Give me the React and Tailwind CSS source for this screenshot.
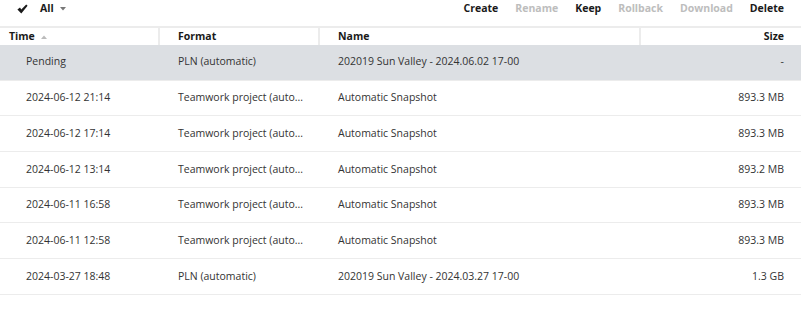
import React from 'react';

const rows = [
  { time: 'Pending', format: 'PLN (automatic)', name: '202019 Sun Valley - 2024.06.02 17-00', size: '-', selected: true },
  { time: '2024-06-12 21:14', format: 'Teamwork project (auto...', name: 'Automatic Snapshot', size: '893.3 MB' },
  { time: '2024-06-12 17:14', format: 'Teamwork project (auto...', name: 'Automatic Snapshot', size: '893.3 MB' },
  { time: '2024-06-12 13:14', format: 'Teamwork project (auto...', name: 'Automatic Snapshot', size: '893.2 MB' },
  { time: '2024-06-11 16:58', format: 'Teamwork project (auto...', name: 'Automatic Snapshot', size: '893.3 MB' },
  { time: '2024-06-11 12:58', format: 'Teamwork project (auto...', name: 'Automatic Snapshot', size: '893.3 MB' },
  { time: '2024-03-27 18:48', format: 'PLN (automatic)', name: '202019 Sun Valley - 2024.03.27 17-00', size: '1.3 GB' },
];

const actions = [
  { label: 'Create', enabled: true },
  { label: 'Rename' },
  { label: 'Keep', enabled: true },
  { label: 'Rollback' },
  { label: 'Download' },
  { label: 'Delete', enabled: true },
];

function Check() {
  return (
    <svg width="11" height="10" viewBox="0 0 11 10" className="text-[#1a1a1a]">
      <path d="M0.4 5.6 L3 3.6 L4.3 5.4 L9.2 0.4 L10.6 1.8 L4.3 9.4 Z" fill="currentColor" />
    </svg>
  );
}

export default function App() {
  return (
    <div className="h-[311px] w-[801px] overflow-hidden bg-white font-['Open_Sans',sans-serif] text-[10.5px] text-[#333]">
      {/* toolbar */}
      <div className="flex h-[26px] items-start justify-between">
        <div className="flex h-[17px] items-center pl-[17px]">
          <Check />
          <span className="ml-[12px] font-bold text-[#1a1a1a]">All</span>
          <svg width="6" height="4" viewBox="0 0 6 4" className="ml-[6px] text-[#777]">
            <path d="M0 0 H6 L3 3.5 Z" fill="currentColor" />
          </svg>
        </div>
        <div className="flex h-[17px] items-center gap-[17px] pr-[17px]">
          {actions.map((a) => (
            <span key={a.label} className={`font-bold ${a.enabled ? 'text-[#1a1a1a]' : 'text-[#bdbdbd]'}`}>
              {a.label}
            </span>
          ))}
        </div>
      </div>

      {/* table */}
      <div className="border-t-2 border-[#ececec]">
        <div className="grid h-[17px] grid-cols-[160px_160px_321px_160px] items-center font-bold text-[#1a1a1a]">
          <div className="flex h-full items-center gap-[6px] border-r-2 border-[#ececec] pl-[9px]">
            Time
            <svg width="6" height="4" viewBox="0 0 6 4" className="text-[#bbb]">
              <path d="M0 4 H6 L3 0.5 Z" fill="currentColor" />
            </svg>
          </div>
          <div className="flex h-full items-center border-r-2 border-[#ececec] pl-[18px]">Format</div>
          <div className="flex h-full items-center border-r-2 border-[#ececec] pl-[18px]">Name</div>
          <div className="flex h-full items-center justify-end pr-[17px]">Size</div>
        </div>
        {rows.map((r, i) => (
          <div
            key={i}
            className={`grid h-[35.7px] grid-cols-[160px_160px_321px_160px] items-center border-b border-[#ececec] ${
              r.selected ? 'bg-[#dcdfe3]' : ''
            }`}
          >
            <div className="pl-[26px]">{r.time}</div>
            <div className="truncate pl-[18px]">{r.format}</div>
            <div className="truncate pl-[18px]">{r.name}</div>
            <div className="pr-[17px] text-right">{r.size}</div>
          </div>
        ))}
      </div>
    </div>
  );
}
